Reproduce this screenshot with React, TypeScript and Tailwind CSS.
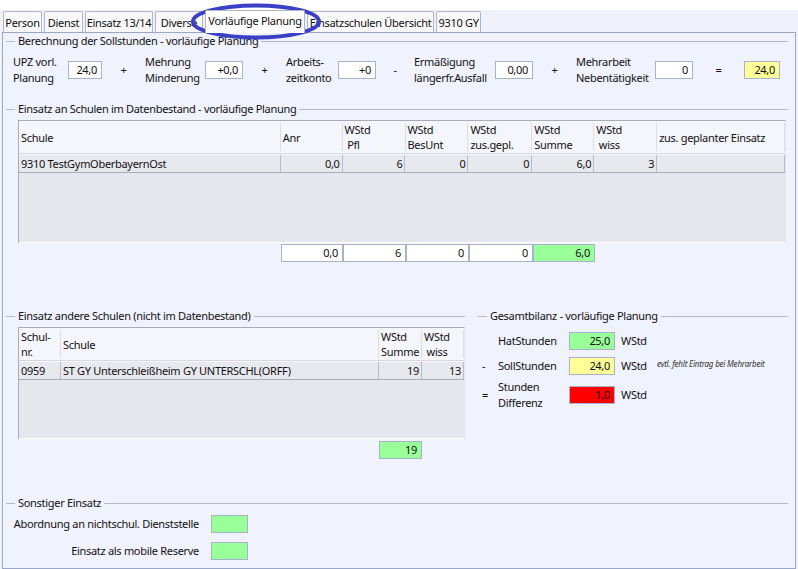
import React from 'react';
import clsx from 'clsx';

const TABS = [
  { label: 'Person', w: 'w-[39px]' },
  { label: 'Dienst', w: 'w-[39px]' },
  { label: 'Einsatz 13/14', w: 'w-[68px]' },
  { label: 'Diverse', w: 'w-[48px]' },
  { label: 'Vorläufige Planung', w: 'w-[100px]', active: true },
  { label: 'Einsatzschulen Übersicht', w: 'w-[127px]' },
  { label: '9310 GY', w: 'w-[45px]' },
];

function Legend({ title, className }: { title: string; className?: string }) {
  return (
    <div className={clsx('flex items-center h-[14px]', className)}>
      <div className="w-[9px] h-px bg-[#b4b7c6]" />
      <span className="px-[3px] leading-[14px] whitespace-nowrap">{title}</span>
      <div className="flex-1 h-px bg-[#b4b7c6]" />
    </div>
  );
}

function Box({ value, bg = 'bg-white', className }: { value?: string; bg?: string; className?: string }) {
  return (
    <div
      className={clsx(
        'h-[18px] border border-[#a7b2cf] text-right pr-[4px] leading-[16px]',
        bg,
        className
      )}
    >
      {value}
    </div>
  );
}

function TwoLine({ a, b, className }: { a: string; b: string; className?: string }) {
  return (
    <div className={clsx('leading-[16px] whitespace-nowrap', className)}>
      <div>{a}</div>
      <div>{b}</div>
    </div>
  );
}

function Sign({ s, className }: { s: string; className?: string }) {
  return <div className={clsx('text-center', className)}>{s}</div>;
}

type Col = { w: string; head: string[]; val: string; left?: boolean };

const MAIN_COLS: Col[] = [
  { w: 'w-[262px]', head: ['Schule'], val: '9310 TestGymOberbayernOst', left: true },
  { w: 'w-[62px]', head: ['Anr'], val: '0,0' },
  { w: 'w-[63px]', head: ['WStd', '\u00a0Pfl'], val: '6' },
  { w: 'w-[63px]', head: ['WStd', 'BesUnt'], val: '0' },
  { w: 'w-[64px]', head: ['WStd', 'zus.gepl.'], val: '0' },
  { w: 'w-[62px]', head: ['WStd', 'Summe'], val: '6,0' },
  { w: 'w-[63px]', head: ['WStd', '\u00a0wiss'], val: '3' },
  { w: 'w-[128px]', head: ['zus. geplanter Einsatz'], val: '' },
];

const OTHER_COLS: Col[] = [
  { w: 'w-[42px]', head: ['Schul-', 'nr.'], val: '0959', left: true },
  { w: 'w-[318px]', head: ['Schule'], val: 'ST GY Unterschleißheim GY UNTERSCHL(ORFF)', left: true },
  { w: 'w-[43px]', head: ['WStd', 'Summe'], val: '19' },
  { w: 'w-[42px]', head: ['WStd', '\u00a0wiss'], val: '13' },
];

function Grid({ cols, bodyH, className }: { cols: Col[]; bodyH: string; className?: string }) {
  return (
    <div className={clsx('border-t border-l border-[#a9abb8] border-r border-r-[#e4e5ee] bg-[#e6e6ee]', className)}>
      <div className="flex h-[33px] bg-[#f5f5fc] border-b border-[#d6d7e2]">
        {cols.map((c, i) => (
          <div
            key={i}
            className={clsx(
              c.w,
              'flex flex-col justify-center pl-[2px] leading-[15px] border-r border-[#dcdde6] my-[2px] whitespace-nowrap'
            )}
          >
            {c.head.map((h, j) => (
              <div key={j}>{h}</div>
            ))}
          </div>
        ))}
      </div>
      <div className="flex h-[19px] border-t border-[#f8f8fc] border-b border-b-[#a9abb8] bg-[#e8e8ef]">
        {cols.map((c, i) => (
          <div
            key={i}
            className={clsx(
              c.w,
              'leading-[17px] border-r border-[#b9bbc8] px-[2px] whitespace-nowrap overflow-hidden',
              c.left ? 'text-left' : 'text-right'
            )}
          >
            {c.val}
          </div>
        ))}
      </div>
      <div className={clsx(bodyH, 'border-b border-[#ffffff]')} />
    </div>
  );
}

function BilanzRow({
  sign,
  label,
  value,
  bg,
  note,
  className,
}: {
  sign: string;
  label: React.ReactNode;
  value: string;
  bg: string;
  note?: string;
  className?: string;
}) {
  return (
    <div className={clsx('flex items-center', className)}>
      <div className="w-[20px] pl-[4px]">{sign}</div>
      <div className="w-[71px] leading-[16px]">{label}</div>
      <Box value={value} bg={bg} className="w-[46px]" />
      <div className="w-[42px] pl-[6px]">WStd</div>
      {note && (
        <div className="italic text-[8px] text-[#333] -mt-[4px] tracking-[-0.2px] whitespace-nowrap">{note}</div>
      )}
    </div>
  );
}

export default function App() {
  return (
    <div className="relative w-[798px] h-[569px] overflow-hidden bg-white font-['Noto_Sans',sans-serif] text-[11px] tracking-[-0.3px] text-[#111]">
      <div className="mt-[10px] bg-[#f0f1fb] h-[559px] flex flex-col">
        <div className="flex items-end h-[22px] pl-[3px] gap-[2px]">
          {TABS.map((t) => (
            <div
              key={t.label}
              className={clsx(
                t.w,
                'border border-b-0 border-[#adb6cc] rounded-t-[2px] text-center whitespace-nowrap',
                t.active
                  ? 'h-[23px] bg-white leading-[20px] relative z-10 -mb-px'
                  : 'h-[21px] bg-[#f8f8fb] leading-[21px]'
              )}
            >
              {t.label}
            </div>
          ))}
        </div>

        <div className="mx-[2px] flex-1 border border-[#9ba7c6] bg-[#f0f2fd] pl-[3px] pr-[7px] pt-[1px]">
          <Legend title="Berechnung der Sollstunden - vorläufige Planung" />

          <div className="flex items-center mt-[6px] pl-[7px] h-[32px]">
            <TwoLine a="UPZ vorl." b="Planung" className="w-[55px]" />
            <Box value="24,0" className="w-[34px]" />
            <Sign s="+" className="w-[43px]" />
            <TwoLine a="Mehrung" b="Minderung" className="w-[60px]" />
            <Box value="+0,0" className="w-[38px]" />
            <Sign s="+" className="w-[43px]" />
            <TwoLine a="Arbeits-" b="zeitkonto" className="w-[52px]" />
            <Box value="+0" className="w-[38px]" />
            <Sign s="-" className="w-[38px]" />
            <TwoLine a="Ermäßigung" b="längerfr.Ausfall" className="w-[81px]" />
            <Box value="0,00" className="w-[38px]" />
            <Sign s="+" className="w-[43px]" />
            <TwoLine a="Mehrarbeit" b="Nebentätigkeit" className="w-[79px]" />
            <Box value="0" className="w-[38px]" />
            <Sign s="=" className="w-[51px]" />
            <Box value="24,0" bg="bg-[#ffff99]" className="w-[36px]" />
          </div>

          <Legend title="Einsatz an Schulen im Datenbestand - vorläufige Planung" className="mt-[16px]" />

          <div className="ml-[12px] mt-[4px] w-[768px]">
            <Grid cols={MAIN_COLS} bodyH="h-[70px]" />
            <div className="flex mt-[1px] pl-[263px]">
              <Box value="0,0" className="w-[62px]" />
              <Box value="6" className="w-[63px]" />
              <Box value="0" className="w-[63px]" />
              <Box value="0" className="w-[64px]" />
              <Box value="6,0" bg="bg-[#99ff99]" className="w-[62px]" />
            </div>
          </div>

          <div className="flex mt-[47px]">
            <div className="w-[459px]">
              <Legend title="Einsatz andere Schulen (nicht im Datenbestand)" />
              <div className="ml-[12px] mt-[4px] w-[447px]">
                <Grid cols={OTHER_COLS} bodyH="h-[59px]" />
                <div className="flex mt-[2px] pl-[361px]">
                  <Box value="19" bg="bg-[#99ff99]" className="w-[43px]" />
                </div>
              </div>
            </div>

            <div className="flex-1 ml-[13px]">
              <Legend title="Gesamtbilanz - vorläufige Planung" />
              <BilanzRow sign="" label="HatStunden" value="25,0" bg="bg-[#99ff99]" className="mt-[9px]" />
              <BilanzRow
                sign="-"
                label="SollStunden"
                value="24,0"
                bg="bg-[#ffff99]"
                note="evtl. fehlt Eintrag bei Mehrarbeit"
                className="mt-[7px]"
              />
              <BilanzRow
                sign="="
                label={
                  <>
                    <div>Stunden</div>
                    <div>Differenz</div>
                  </>
                }
                value="1,0"
                bg="bg-[#ff0000]"
                className="mt-[4px]"
              />
            </div>
          </div>

          <Legend title="Sonstiger Einsatz" className="mt-[37px]" />
          <div className="mt-[5px] flex flex-col gap-[9px]">
            <div className="flex items-center">
              <div className="w-[205px] text-right pr-[12px] whitespace-nowrap">Abordnung an nichtschul. Dienststelle</div>
              <Box bg="bg-[#99ff99]" className="w-[37px]" />
            </div>
            <div className="flex items-center">
              <div className="w-[205px] text-right pr-[12px] whitespace-nowrap">Einsatz als mobile Reserve</div>
              <Box bg="bg-[#99ff99]" className="w-[37px]" />
            </div>
          </div>
        </div>
      </div>

      <svg className="absolute left-[190px] top-[2px] pointer-events-none" width="138" height="40" viewBox="0 0 138 40">
        <ellipse cx="66" cy="19.5" rx="63" ry="16" fill="none" stroke="#3b3fc6" strokeWidth="4" />
      </svg>
    </div>
  );
}
